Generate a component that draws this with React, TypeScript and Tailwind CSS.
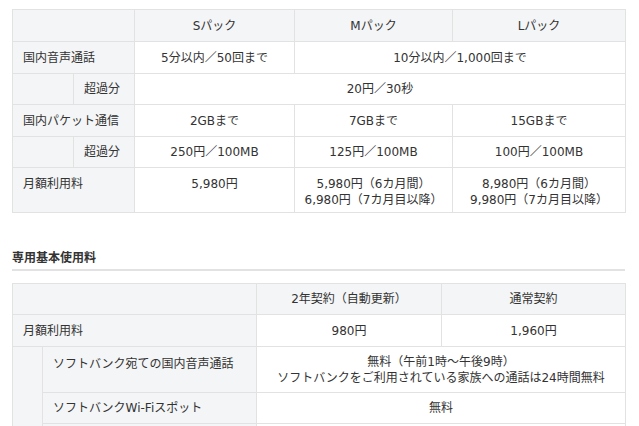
const cell = 'border border-[#e2e2e2] font-normal';
const gray = `${cell} bg-[#f4f5f6]`;
const data = `${cell} bg-white text-center`;

export default function App() {
  return (
    <div className="bg-white min-h-screen w-[639px] h-[426px] overflow-hidden text-[12px] leading-4 text-[#333] font-['DejaVu_Sans','Noto_Sans_CJK_JP',sans-serif]">
      {/* パック料金 */}
      <table className="table-fixed border-collapse w-[613px] ml-[12px] mt-[9px]">
        <colgroup>
          <col className="w-[61px]" />
          <col className="w-[61px]" />
          <col className="w-[160px]" />
          <col className="w-[158px]" />
          <col className="w-[173px]" />
        </colgroup>
        <thead>
          <tr className="h-[32px]">
            <th colSpan={2} className={gray} />
            <th className={`${gray} text-center`}>Sパック</th>
            <th className={`${gray} text-center`}>Mパック</th>
            <th className={`${gray} text-center`}>Lパック</th>
          </tr>
        </thead>
        <tbody>
          <tr className="h-[32px]">
            <td colSpan={2} className={`${gray} pl-[10px]`}>国内音声通話</td>
            <td className={data}>5分以内／50回まで</td>
            <td colSpan={2} className={data}>10分以内／1,000回まで</td>
          </tr>
          <tr className="h-[31px]">
            <td className={gray} />
            <td className={`${gray} pl-[10px]`}>超過分</td>
            <td colSpan={3} className={data}>20円／30秒</td>
          </tr>
          <tr className="h-[32px]">
            <td colSpan={2} className={`${gray} pl-[10px]`}>国内パケット通信</td>
            <td className={data}>2GBまで</td>
            <td className={data}>7GBまで</td>
            <td className={data}>15GBまで</td>
          </tr>
          <tr className="h-[31px]">
            <td className={gray} />
            <td className={`${gray} pl-[10px]`}>超過分</td>
            <td className={data}>250円／100MB</td>
            <td className={data}>125円／100MB</td>
            <td className={data}>100円／100MB</td>
          </tr>
          <tr className="h-[45px] align-top">
            <td colSpan={2} className={`${gray} pl-[10px] pt-2`}>月額利用料</td>
            <td className={`${data} pt-2`}>5,980円</td>
            <td className={`${data} pt-2`}>
              5,980円（6カ月間）
              <br />
              6,980円（7カ月目以降）
            </td>
            <td className={`${data} pt-2`}>
              8,980円（6カ月間）
              <br />
              9,980円（7カ月目以降）
            </td>
          </tr>
        </tbody>
      </table>

      <div className="ml-[12px] w-[613px] mt-[37px] pb-[3px] border-b-2 border-[#e2e2e2]">
        <h2 className="font-bold text-[12px] leading-4 text-[#333]">専用基本使用料</h2>
      </div>

      {/* 専用基本使用料 */}
      <table className="table-fixed border-collapse w-[613px] ml-[12px] mt-[12px]">
        <colgroup>
          <col className="w-[30px]" />
          <col className="w-[214px]" />
          <col className="w-[185px]" />
          <col className="w-[184px]" />
        </colgroup>
        <thead>
          <tr className="h-[31px]">
            <th colSpan={2} className={gray} />
            <th className={`${gray} text-center`}>2年契約（自動更新）</th>
            <th className={`${gray} text-center`}>通常契約</th>
          </tr>
        </thead>
        <tbody>
          <tr className="h-[32px]">
            <td colSpan={2} className={`${gray} pl-[10px]`}>月額利用料</td>
            <td className={data}>980円</td>
            <td className={data}>1,960円</td>
          </tr>
          <tr className="h-[46px]">
            <td rowSpan={3} className={gray} />
            <td className={`${gray} pl-[10px] pt-[9px] align-top`}>ソフトバンク宛ての国内音声通話</td>
            <td colSpan={2} className={data}>
              無料（午前1時～午後9時）
              <br />
              ソフトバンクをご利用されている家族への通話は24時間無料
            </td>
          </tr>
          <tr className="h-[31px]">
            <td className={`${gray} pl-[10px]`}>ソフトバンクWi-Fiスポット</td>
            <td colSpan={2} className={data}>無料</td>
          </tr>
          <tr className="h-[32px]">
            <td className={gray} />
            <td colSpan={2} className={data} />
          </tr>
        </tbody>
      </table>
    </div>
  );
}
